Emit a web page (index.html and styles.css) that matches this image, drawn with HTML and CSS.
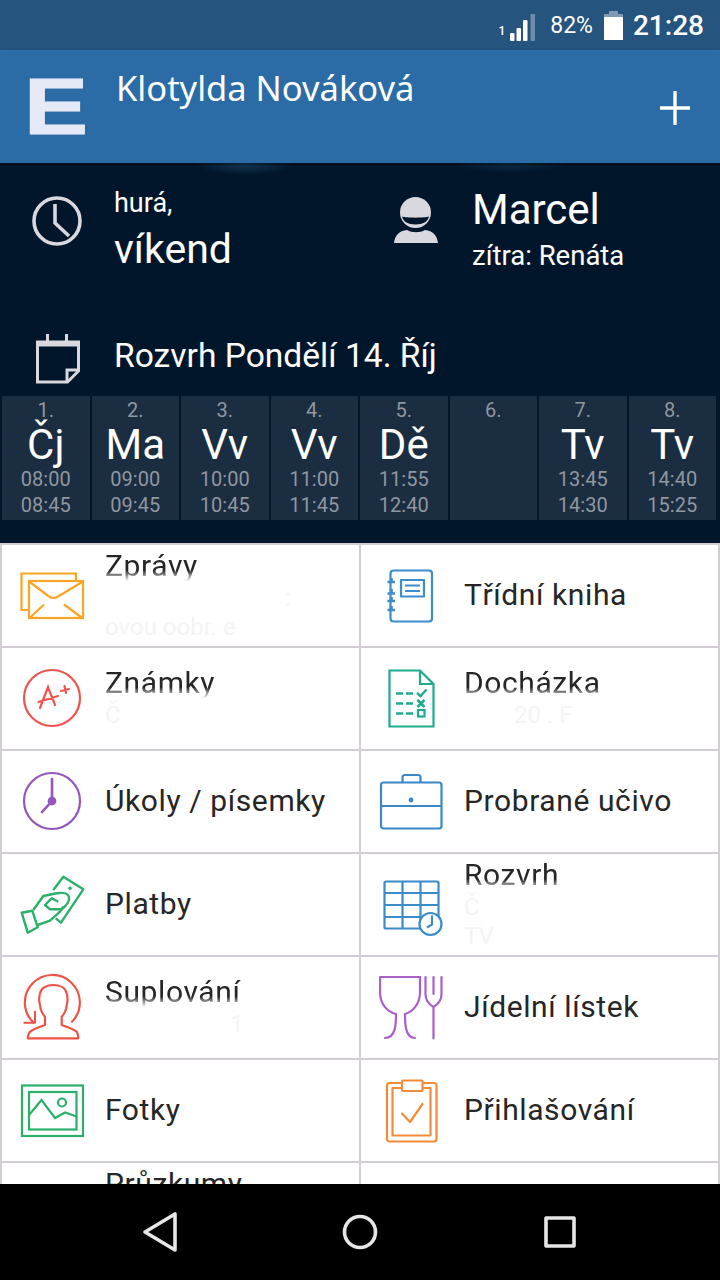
FILE: index.html
```html
<!DOCTYPE html>
<html lang="cs">
<head>
  <meta charset="UTF-8">
  <meta name="viewport" content="width=device-width, initial-scale=1.0">
  <title>Klotylda Nováková</title>
  <link rel="stylesheet" href="styles.css">
</head>
<body>
  <div class="statusbar">
    <span class="sim">1</span>
    <svg class="signal" width="25" height="27" viewBox="0 0 25 27">
      <rect x="0" y="19" width="4.500" height="8" rx="1" fill="#fff"/>
      <rect x="6.500" y="14" width="4.500" height="13" rx="1" fill="#fff"/>
      <rect x="13" y="6" width="4.500" height="21" rx="1" fill="#fff"/>
      <rect x="20.500" y="0" width="4.500" height="27" rx="1" fill="#6f8eab"/>
    </svg>
    <span class="battery-text">82%</span>
    <svg class="battery" width="19" height="29" viewBox="0 0 19 29">
      <path d="M5 0h9v3h5v4H0V3h5z" fill="#7f9ab4"/>
      <rect x="0" y="6" width="19" height="23" fill="#fff"/>
    </svg>
    <span class="clock-text">21:28</span>
  </div>

  <div class="header">
    <span class="logo">E</span>
    <span class="user-name">Klotylda Nováková</span>
    <svg class="add" width="30" height="34" viewBox="0 0 30 34">
      <path d="M15 0v34M0 17h30" stroke="#fff" stroke-width="3.400"/>
    </svg>
  </div>

  <div class="dark">
    <div class="info">
      <div class="info-col">
        <svg class="info-icon" width="50" height="52" viewBox="0 0 50 52" fill="none" stroke="#d8d8de" stroke-width="3.600">
          <circle cx="25" cy="26" r="23"/>
          <path d="M23 9v19l14 13"/>
        </svg>
        <div class="when">
          <div class="when-small">hurá,</div>
          <div class="when-big">víkend</div>
        </div>
      </div>
      <div class="info-col">
        <svg class="person-icon" width="44" height="47" viewBox="0 0 44 47" fill="#d8d8de">
          <ellipse cx="21.500" cy="15.500" rx="15.500" ry="15.500"/>
          <path d="M8 19.500c4 1.500 23 1.500 27 0-1 5-6 8-13.500 8S9 24.500 8 19.500z" fill="#01162b"/>
          <path d="M0 46c1-8 5-12 13-13 5 3 13 3 18 0 8 1 12 5 13 13z"/>
        </svg>
        <div class="names">
          <div class="name-big">Marcel</div>
          <div class="name-small">zítra: Renáta</div>
        </div>
      </div>
    </div>

    <div class="day-title">
      <svg class="cal-icon" width="44" height="50" viewBox="0 0 44 50" fill="none" stroke="#d8d8de">
        <path d="M1.500 10v38h30l11-11V10z" stroke-width="3"/>
        <path d="M0 9.500h44" stroke-width="6"/>
        <path d="M11.500 0v8M30.500 0v8" stroke-width="3"/>
        <path d="M31 48V36h11" stroke-width="3"/>
      </svg>
      <span class="day-text">Rozvrh Pondělí 14. Říj</span>
    </div>

    <div class="lessons">
      <div class="lesson"><div class="num">1.</div><div class="subj">Čj</div><div class="time">08:00</div><div class="time">08:45</div></div>
      <div class="lesson"><div class="num">2.</div><div class="subj">Ma</div><div class="time">09:00</div><div class="time">09:45</div></div>
      <div class="lesson"><div class="num">3.</div><div class="subj">Vv</div><div class="time">10:00</div><div class="time">10:45</div></div>
      <div class="lesson"><div class="num">4.</div><div class="subj">Vv</div><div class="time">11:00</div><div class="time">11:45</div></div>
      <div class="lesson"><div class="num">5.</div><div class="subj">Dě</div><div class="time">11:55</div><div class="time">12:40</div></div>
      <div class="lesson"><div class="num">6.</div></div>
      <div class="lesson"><div class="num">7.</div><div class="subj">Tv</div><div class="time">13:45</div><div class="time">14:30</div></div>
      <div class="lesson"><div class="num">8.</div><div class="subj">Tv</div><div class="time">14:40</div><div class="time">15:25</div></div>
    </div>
  </div>

  <div class="tiles">
    <div class="tile">
      <svg class="tile-icon" width="66" height="81" viewBox="0 0 66 81" fill="none" stroke="#f9a526" stroke-width="2.200">
        <path d="M9 55H1.500V18.500H56V26"/>
        <rect x="9" y="26" width="54" height="37"/>
        <path d="M9 26l20 15c3 2 6 2 9 0l25-15M9 63l15-14M63 63L44 49" transform="translate(0 .5)"/>
      </svg>
      <div class="tile-text">
        <div class="tile-name fade">Zprávy</div>
        <div class="tile-sub"><span class="sub-right">:</span></div>
        <div class="tile-sub">ovou oobr. e</div>
      </div>
    </div>
    <div class="tile">
      <svg class="tile-icon" width="66" height="81" viewBox="0 0 66 81" fill="none" stroke="#3d8ccb" stroke-width="2.200" stroke-linejoin="round">
        <rect x="11.500" y="15.500" width="41.500" height="51" rx="3"/>
        <path d="M8.500 27h7.500M8.500 38.500h7.500M8.500 46h7.500M8.500 55h7.500" stroke-width="2.400"/>
        <path d="M12.300 23v4M12.300 34v4M12.300 42v4M12.300 51v4" stroke-width="3"/>
        <rect x="22" y="25" width="23" height="16.500"/>
        <path d="M26 30.500h15M26 36h15"/>
      </svg>
      <div class="tile-text"><div class="tile-name">Třídní kniha</div></div>
    </div>
    <div class="tile">
      <svg class="tile-icon" width="66" height="81" viewBox="0 0 66 81" fill="none" stroke="#ef5350" stroke-width="2.200" stroke-linecap="round">
        <circle cx="32" cy="40" r="28"/>
        <path d="M20 50l8-21c2 6 5 12 7 18M18.500 44L38 38M41 33l8-2M44.500 28l1.500 7"/>
      </svg>
      <div class="tile-text">
        <div class="tile-name fade">Známky</div>
        <div class="tile-sub">Č</div>
      </div>
    </div>
    <div class="tile">
      <svg class="tile-icon" width="66" height="81" viewBox="0 0 66 81" fill="none" stroke="#1fa98d" stroke-width="2.200">
        <path d="M10.500 12.500H41l13.500 13.500v42.500h-44zM41 12.500V26h13.500"/>
        <path d="M17 35.500h7M27 35.500h7M17 45.500h7M27 45.500h7M17 55.500h7M27 55.500h7M38 35l3.500 3 6-6.500" stroke-width="2.400"/>
        <path d="M38.500 42l7 7M45.500 42l-7 7" stroke-width="2.600"/>
        <rect x="39" y="52" width="6.500" height="6.500"/>
      </svg>
      <div class="tile-text">
        <div class="tile-name fade">Docházka</div>
        <div class="tile-sub"><span class="sub-mid">20 . F</span></div>
      </div>
    </div>
    <div class="tile">
      <svg class="tile-icon" width="66" height="81" viewBox="0 0 66 81" fill="none" stroke="#9555bb" stroke-width="2.200" stroke-linecap="round">
        <circle cx="32" cy="40" r="28"/>
        <path d="M32 18v22l-10 11" stroke-width="2.600"/>
        <circle cx="32" cy="40" r="3.300" fill="#9555bb"/>
      </svg>
      <div class="tile-text"><div class="tile-name">Úkoly / písemky</div></div>
    </div>
    <div class="tile">
      <svg class="tile-icon" width="66" height="81" viewBox="0 0 66 81" fill="none" stroke="#3a87c6" stroke-width="2.200" stroke-linejoin="round">
        <rect x="2" y="21.500" width="60.500" height="46" rx="2.500"/>
        <path d="M23.500 21.500v-5c0-1.500 1-2.500 2.500-2.500h13c1.500 0 2.500 1 2.500 2.500v5M2 45h60.500"/>
        <circle cx="32" cy="39" r="2.400" fill="#3a87c6" stroke="none"/>
      </svg>
      <div class="tile-text"><div class="tile-name">Probrané učivo</div></div>
    </div>
    <div class="tile">
      <svg class="tile-icon" width="66" height="81" viewBox="0 0 66 81" fill="none" stroke="#2bb06b" stroke-width="2.400" stroke-linejoin="round">
        <path d="M33.300 26l10-13.300 20 12.600L41 58.700l-5.300-4.400"/>
        <circle cx="50" cy="24.300" r="1.800" fill="#2bb06b" stroke="none"/>
        <path d="M1.700 48.700l10.600-2 5.400 16.600-10 5.400z"/>
        <path d="M13.300 46l10-14 13.400-2.700c6-1 11.600 0 12.300 4 .7 3.500-1 7-7.300 12L30 45.300l-5-4.300 6.700-6.700 6.600 3.400"/>
        <path d="M17.700 61L30 56.700 40 47.700l3.300-5"/>
      </svg>
      <div class="tile-text"><div class="tile-name">Platby</div></div>
    </div>
    <div class="tile">
      <svg class="tile-icon" width="66" height="81" viewBox="0 0 66 81" fill="none" stroke="#3a8cc8" stroke-width="2.200" stroke-linejoin="round">
        <rect x="5.500" y="17.500" width="54" height="47" rx="1.500"/>
        <path d="M5.500 29h54M5.500 41h54M5.500 53h54M23.500 17.500v47M41.500 17.500v47"/>
        <circle cx="51.500" cy="60" r="11" fill="#fff"/>
        <path d="M53 51.500v9l-5 3"/>
      </svg>
      <div class="tile-text">
        <div class="tile-name fade">Rozvrh</div>
        <div class="tile-sub">Č</div>
        <div class="tile-sub">TV</div>
      </div>
    </div>
    <div class="tile">
      <svg class="tile-icon" width="66" height="81" viewBox="0 0 66 81" fill="none" stroke="#ef5246" stroke-width="2.200" stroke-linecap="round" stroke-linejoin="round">
        <path d="M52 54.700A27.500 27.500 0 1 0 13.500 55.500"/>
        <path d="M4.300 55.700H15V44.700" stroke-width="2"/>
        <path d="M7.700 71.300h50.600c0-3-.6-5-1.600-6.600-3.400-3-9-4.700-15-6.700v-8.300c2.800-3 4.600-7.400 5-11.700 1.200-4 1-8 0-11.700C45.500 21 40 18 33.300 18s-12.300 3-13.300 8.300c-1 3.700-1.200 7.700 0 11.700.4 4.300 2.200 8.700 5 11.700V58c-6 2-11.600 3.700-15 6.700-1.300 1.600-2.300 3.600-2.300 6.600z"/>
      </svg>
      <div class="tile-text">
        <div class="tile-name fade">Suplování</div>
        <div class="tile-sub"><span class="sub-far">1</span></div>
      </div>
    </div>
    <div class="tile">
      <svg class="tile-icon" width="66" height="81" viewBox="0 0 66 81" fill="none" stroke="#a960c9" stroke-width="2.200" stroke-linecap="round">
        <path d="M1 10h40v15c0 13-8 20-15 22 0 9 0 24 10 24M1 10v15c0 13 8 20 16 22 0 9 0 24-11 24"/>
        <path d="M46.500 10v17M54.500 10v17M62.500 10v17c0 6-3 10-8 13v31.500M46.500 27c0 6 3 10 8 13"/>
      </svg>
      <div class="tile-text"><div class="tile-name">Jídelní lístek</div></div>
    </div>
    <div class="tile">
      <svg class="tile-icon" width="66" height="81" viewBox="0 0 66 81" fill="none" stroke="#2bb06b" stroke-width="2.200">
        <rect x="2" y="15.500" width="61" height="50.500"/>
        <rect x="9" y="22" width="47.500" height="37.500"/>
        <path d="M9 45l12.500-15L35 48l10-5.500 11.500 4"/>
        <circle cx="42" cy="32.500" r="4"/>
      </svg>
      <div class="tile-text"><div class="tile-name">Fotky</div></div>
    </div>
    <div class="tile">
      <svg class="tile-icon" width="66" height="81" viewBox="0 0 66 81" fill="none" stroke="#f28c38" stroke-width="2.200" stroke-linejoin="round">
        <rect x="8" y="13" width="49.500" height="58.500" rx="2.500"/>
        <path d="M23 18H13.500v47.500h38V18H43"/>
        <rect x="23" y="10.500" width="20.500" height="10.500" fill="#fff" rx="1"/>
        <path d="M23 43.500l8 8.500 12.500-18" stroke-linecap="round"/>
      </svg>
      <div class="tile-text"><div class="tile-name">Přihlašování</div></div>
    </div>
    <div class="tile">
      <div class="tile-icon"></div>
      <div class="tile-text">
        <div class="tile-name">Průzkumy</div>
        <div class="tile-sub"></div>
        <div class="tile-sub"></div>
      </div>
    </div>
    <div class="tile"></div>
  </div>

  <div class="navbar">
    <svg width="40" height="42" viewBox="0 0 40 42" fill="none" stroke="#e6e6e6" stroke-width="3.600" stroke-linejoin="round">
      <path d="M35 3v36L5 21z"/>
    </svg>
    <svg width="40" height="40" viewBox="0 0 40 40" fill="none" stroke="#e6e6e6" stroke-width="3.600">
      <circle cx="20" cy="20" r="15.500"/>
    </svg>
    <svg width="40" height="40" viewBox="0 0 40 40" fill="none" stroke="#e6e6e6" stroke-width="3.600" stroke-linejoin="round">
      <rect x="6" y="6" width="28" height="28"/>
    </svg>
  </div>
</body>
</html>
```

FILE: styles.css
```css
html, body {
  margin: 0;
  padding: 0;
}
body {
  width: 720px;
  height: 1280px;
  overflow: hidden;
  display: flex;
  flex-direction: column;
  font-family: Roboto, "Liberation Sans", sans-serif;
  background: #000;
}

/* status bar */
.statusbar {
  height: 50px;
  flex: none;
  display: flex;
  align-items: center;
  justify-content: flex-end;
  padding-right: 16px;
  color: #fff;
  background: #25547f;
}
.sim {
  font-size: 12px;
  font-weight: 500;
  margin: 12px 5px 0 0;
}
.signal {
  margin: 5px 15px 0 0;
}
.battery-text {
  font-size: 23px;
  margin-right: 11px;
}
.battery {
  margin-right: 10px;
}
.clock-text {
  font-size: 28px;
  font-weight: 500;
}

/* header */
.header {
  height: 113px;
  flex: none;
  display: flex;
  position: relative;
  z-index: 1;
  background: #2b6ca6;
  box-shadow: 0 2px 3px rgba(0,0,0,0.5);
  color: #fff;
}
.logo {
  font-family: "Liberation Sans", sans-serif;
  font-weight: bold;
  font-size: 80px;
  line-height: 113px;
  height: 113px;
  width: 59px;
  margin: 0 33px 0 24px;
  color: #e6eaf6;
  -webkit-text-stroke: 1px #e6eaf6;
  transform: scaleX(1.2);
  transform-origin: left center;
}
.user-name {
  font-family: "Noto Sans", sans-serif;
  font-size: 34.500px;
  line-height: 76px;
  height: 76px;
  flex: 1;
}
.add {
  margin: 41px 30px 0 0;
}

/* dark area */
.dark {
  flex: none;
  height: 380px;
  box-sizing: border-box;
  color: #fff;
  background:
    radial-gradient(ellipse 50px 12px at 245px 0, rgba(50,110,160,0.45), transparent),
    radial-gradient(ellipse 60px 10px at 510px 0, rgba(50,110,160,0.3), transparent),
    #01162b;
}
.info {
  display: grid;
  grid-template-columns: 362px 1fr;
  padding: 19px 0 0 32px;
  height: 92px;
}
.info-col {
  display: flex;
  align-items: flex-start;
}
.info-icon {
  margin: 13px 32px 0 0;
}
.when {
  margin-top: 4px;
}
.when-small {
  font-size: 27px;
  line-height: 34px;
}
.when-big {
  font-size: 41px;
  line-height: 58px;
}
.person-icon {
  margin: 15px 35px 0 0;
}
.names {
  margin-left: -1px;
}
.name-big {
  font-size: 42px;
  line-height: 56px;
}
.name-small {
  font-size: 27.500px;
  line-height: 36px;
}
.day-title {
  display: flex;
  align-items: center;
  margin-top: 60px;
  padding-left: 36px;
  height: 50px;
}
.cal-icon {
  flex: none;
}
.day-text {
  font-size: 33.600px;
  margin: -8px 0 0 34px;
}
.lessons {
  display: grid;
  grid-template-columns: repeat(8, 1fr);
  gap: 2px;
  margin: 12px 4px 0 2px;
}
.lesson {
  height: 124px;
  background: #1b2d41;
  text-align: center;
  color: #8f979f;
  font-size: 20px;
}
.num {
  line-height: 28px;
}
.subj {
  color: #fff;
  font-size: 42px;
  line-height: 42px;
}
.time {
  line-height: 26px;
}

/* menu tiles */
.tiles {
  flex: 1;
  min-height: 0;
  overflow: hidden;
  display: grid;
  grid-template-columns: 1fr 1fr;
  grid-auto-rows: 101px;
  gap: 2px;
  padding: 2px;
  background: #d2cdd4;
}
.tile {
  background: #fff;
  display: flex;
  align-items: center;
  padding-left: 18px;
  overflow: hidden;
}
.tile-icon {
  flex: none;
  width: 66px;
  height: 81px;
  margin-right: 19px;
}
.tile-text {
  margin-top: -2px;
}
.tile-name {
  color: #262626;
  font-size: 30px;
  line-height: 36px;
  letter-spacing: 0.6px;
  white-space: nowrap;
}
.tile-name.fade {
  -webkit-mask-image: linear-gradient(#000 62%, transparent 92%);
  mask-image: linear-gradient(#000 62%, transparent 92%);
}
.tile-sub {
  color: #f4f4f4;
  font-size: 24px;
  height: 29px;
  line-height: 29px;
  white-space: nowrap;
}
.sub-right {
  margin-left: 180px;
}
.sub-mid {
  margin-left: 50px;
}
.sub-far {
  margin-left: 125px;
}

/* android nav */
.navbar {
  height: 96px;
  flex: none;
  display: flex;
  align-items: center;
  justify-content: center;
  gap: 160px;
  background: #000;
}
```
